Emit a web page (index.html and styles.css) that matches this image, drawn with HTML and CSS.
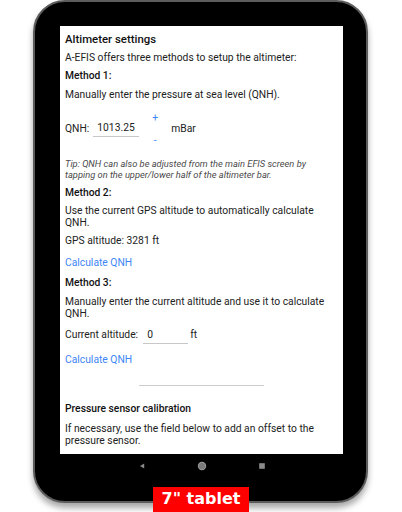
FILE: index.html
```html
<!DOCTYPE html>
<html>
<head>
<meta charset="utf-8">
<link rel="stylesheet" href="styles.css">
</head>
<body>
<div class="stage">
  <div class="device">
    <div class="screen">
      <h1 class="title">Altimeter settings</h1>
      <p class="txt p1">A-EFIS offers three methods to setup the altimeter:</p>
      <h2 class="method m1">Method 1:</h2>
      <p class="txt p2">Manually enter the pressure at sea level (QNH).</p>
      <div class="qnh-row">
        <span class="lbl">QNH:</span>
        <span class="field field-qnh">1013.25</span>
        <span class="stepper"><span class="plus">+</span><span class="minus">-</span></span>
        <span class="unit">mBar</span>
      </div>
      <p class="tip">Tip: QNH can also be adjusted from the main EFIS screen by tapping on the upper/lower half of the altimeter bar.</p>
      <h2 class="method m2">Method 2:</h2>
      <p class="txt p3">Use the current GPS altitude to automatically calculate QNH.</p>
      <p class="txt gps">GPS altitude: 3281 ft</p>
      <p class="link calc1">Calculate QNH</p>
      <h2 class="method m3">Method 3:</h2>
      <p class="txt p4">Manually enter the current altitude and use it to calculate QNH.</p>
      <div class="alt-row">
        <span class="lbl">Current altitude:</span>
        <span class="field field-alt">0</span>
        <span class="unit-ft">ft</span>
      </div>
      <p class="link calc2">Calculate QNH</p>
      <hr class="divider">
      <h2 class="method m4">Pressure sensor calibration</h2>
      <p class="txt p5">If necessary, use the field below to add an offset to the pressure sensor.</p>
    </div>
    <div class="navbar">
      <svg class="nav-back" width="8" height="8" viewBox="0 0 8 8"><path d="M6.2 1.5 L2 4 L6.2 6.5 Z" fill="#8a8a8a"/></svg>
      <svg class="nav-home" width="10" height="10" viewBox="0 0 10 10"><circle cx="5" cy="5" r="4.2" fill="#9a9a9a"/><circle cx="5" cy="5" r="3.2" fill="#7a7a7a"/></svg>
      <svg class="nav-recent" width="8" height="8" viewBox="0 0 8 8"><rect x="1.2" y="1.2" width="5.6" height="5.6" fill="#8a8a8a"/></svg>
    </div>
  </div>
  <div class="badge">7" tablet</div>
</div>
</body>
</html>
```

FILE: styles.css
```css
html, body {
  margin: 0;
  padding: 0;
  background: #ffffff;
}

.stage {
  position: relative;
  width: 402px;
  height: 512px;
  overflow: hidden;
  background: #ffffff;
}

.device {
  box-sizing: border-box;
  margin-left: 33px;
  margin-top: 0;
  width: 335px;
  height: 503px;
  background: #000000;
  border: 2px solid #5c5c5c;
  border-radius: 32px;
  padding: 24px 23px 0 25px;
  box-shadow: 0 5px 6px rgba(0, 0, 0, 0.35);
}

.screen {
  width: 283px;
  height: 428px;
  overflow: hidden;
  background: #ffffff;
  box-sizing: border-box;
  padding: 6px 6px 0 5px;
  font-family: Roboto, "Noto Sans", sans-serif;
  color: #222222;
  font-size: 10.3px;
  line-height: 12px;
}

.title {
  margin: 0;
  font-size: 11.4px;
  line-height: 14px;
  font-weight: 500;
  color: #111;
}

p, h2 {
  margin: 0;
}

.txt {
  font-size: 10.3px;
  line-height: 12px;
}

.method {
  font-size: 10.3px;
  line-height: 12px;
  font-weight: 500;
  color: #111;
}

.p1 { margin-top: 6px; }
.m1 { margin-top: 6px; }
.p2 { margin-top: 7px; }

.qnh-row {
  margin-top: 9px;
  height: 38px;
  display: flex;
  align-items: center;
}

.lbl {
  line-height: 12px;
}

.field {
  display: inline-block;
  box-sizing: border-box;
  border-bottom: 1px solid #c8c8c8;
  line-height: 12px;
  padding: 1px 0 2px 4px;
}

.field-qnh {
  margin-left: 4px;
  width: 46px;
}

.stepper {
  align-self: stretch;
  display: flex;
  flex-direction: column;
  justify-content: space-between;
  align-items: center;
  width: 12px;
  margin-left: 10px;
  color: #3d86f5;
  font-size: 10.3px;
}

.plus {
  line-height: 14px;
  margin-top: 1px;
}

.minus {
  line-height: 14px;
}

.unit {
  margin-left: 10px;
}

.tip {
  margin-top: 10px;
  font-size: 9.3px;
  line-height: 11px;
  font-style: italic;
  color: #4a4a4a;
}

.m2 { margin-top: 7px; }
.p3 { margin-top: 6px; }
.gps { margin-top: 6px; }

.link {
  color: #3d86f5;
  font-size: 10.3px;
  line-height: 12px;
}

.calc1 { margin-top: 10px; }
.m3 { margin-top: 8px; }
.p4 { margin-top: 7px; }

.alt-row {
  margin-top: 8px;
  display: flex;
  align-items: baseline;
}

.field-alt {
  margin-left: 5px;
  width: 45px;
}

.unit-ft {
  margin-left: 2px;
}

.calc2 { margin-top: 10px; }

.divider {
  width: 125px;
  margin: 19px auto 0;
  border: 0;
  border-top: 1px solid #cccccc;
  height: 0;
}

.m4 { margin-top: 17px; }
.p5 { margin-top: 8px; }

.navbar {
  height: 24px;
  display: flex;
  justify-content: center;
  align-items: center;
  gap: 51px;
}

.badge {
  position: absolute;
  left: 153px;
  top: 487px;
  width: 96px;
  height: 27px;
  background: #ff0000;
  color: #ffffff;
  font-family: "DejaVu Sans", Verdana, sans-serif;
  font-weight: 700;
  font-size: 16px;
  line-height: 24px;
  text-align: center;
}
```
